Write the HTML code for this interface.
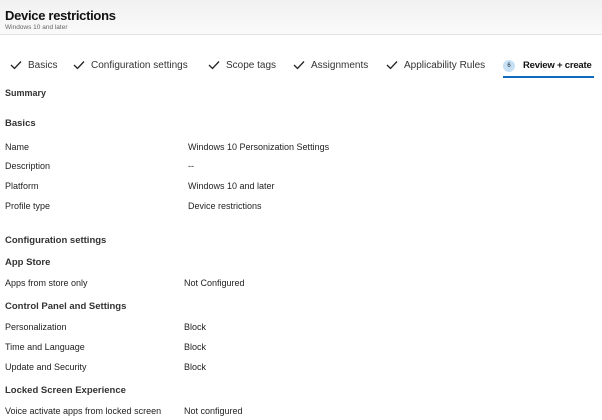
<!DOCTYPE html>
<html><head><meta charset="utf-8"><style>
body{margin:0;width:602px;height:420px;background:#fff;font-family:"Liberation Sans",sans-serif;color:#222;position:relative;overflow:hidden}
.hdr{position:absolute;left:0;top:0;width:602px;height:34px;background:linear-gradient(#f1f1f1,#fafafa);border-bottom:1px solid #e2e2e2}
.t{position:absolute;white-space:nowrap;line-height:12px}
.s{font-size:9px}
.b{font-size:9.5px;font-weight:bold;color:#333}
.tab{position:absolute;top:60px;font-size:10px;color:#333;white-space:nowrap;line-height:12px}
.tab svg{vertical-align:-2px;margin-right:6px}
</style></head><body>
<div class="hdr"></div>
<div class="t" style="left:5px;top:8px;font-size:13px;line-height:16px;color:#111;font-weight:bold;letter-spacing:-0.3px">Device restrictions</div>
<div class="t" style="left:5px;top:24px;font-size:6.5px;line-height:8px;color:#666">Windows 10 and later</div>

<div class="tab" style="left:10px"><svg width="12" height="10" viewBox="0 0 12 10"><path d="M1 5 L4.5 8.5 L11 1.5" fill="none" stroke="#222" stroke-width="1.3"/></svg>Basics</div>
<div class="tab" style="left:73px"><svg width="12" height="10" viewBox="0 0 12 10"><path d="M1 5 L4.5 8.5 L11 1.5" fill="none" stroke="#222" stroke-width="1.3"/></svg>Configuration settings</div>
<div class="tab" style="left:208px"><svg width="12" height="10" viewBox="0 0 12 10"><path d="M1 5 L4.5 8.5 L11 1.5" fill="none" stroke="#222" stroke-width="1.3"/></svg>Scope tags</div>
<div class="tab" style="left:293px"><svg width="12" height="10" viewBox="0 0 12 10"><path d="M1 5 L4.5 8.5 L11 1.5" fill="none" stroke="#222" stroke-width="1.3"/></svg>Assignments</div>
<div class="tab" style="left:386px"><svg width="12" height="10" viewBox="0 0 12 10"><path d="M1 5 L4.5 8.5 L11 1.5" fill="none" stroke="#222" stroke-width="1.3"/></svg>Applicability Rules</div>
<div style="position:absolute;left:503px;top:60px;width:12px;height:12px;border-radius:50%;background:#c7e0f4;font-size:6px;line-height:12px;text-align:center;color:#123">6</div>
<div class="tab" style="left:523px;font-weight:bold;color:#111;font-size:9.5px;letter-spacing:-0.2px">Review + create</div>
<div style="position:absolute;left:503px;top:76px;width:91px;height:2px;background:#0f6cbd"></div>

<div class="t b" style="left:5px;top:87px;font-size:9px">Summary</div>
<div class="t b" style="left:5px;top:118px">Basics</div>
<div class="t s" style="left:5px;top:141px">Name</div><div class="t s" style="left:188px;top:141px">Windows 10 Personization Settings</div>
<div class="t s" style="left:5px;top:160px">Description</div><div class="t s" style="left:188px;top:160px">--</div>
<div class="t s" style="left:5px;top:180px">Platform</div><div class="t s" style="left:188px;top:180px">Windows 10 and later</div>
<div class="t s" style="left:5px;top:200px">Profile type</div><div class="t s" style="left:188px;top:200px">Device restrictions</div>
<div class="t b" style="left:5px;top:235px">Configuration settings</div>
<div class="t b" style="left:5px;top:257px">App Store</div>
<div class="t s" style="left:5px;top:277px">Apps from store only</div><div class="t s" style="left:184px;top:277px">Not Configured</div>
<div class="t b" style="left:5px;top:301px">Control Panel and Settings</div>
<div class="t s" style="left:5px;top:321px">Personalization</div><div class="t s" style="left:184px;top:321px">Block</div>
<div class="t s" style="left:5px;top:341px">Time and Language</div><div class="t s" style="left:184px;top:341px">Block</div>
<div class="t s" style="left:5px;top:361px">Update and Security</div><div class="t s" style="left:184px;top:361px">Block</div>
<div class="t b" style="left:5px;top:385px">Locked Screen Experience</div>
<div class="t s" style="left:5px;top:405px">Voice activate apps from locked screen</div><div class="t s" style="left:184px;top:405px">Not configured</div>
</body></html>
